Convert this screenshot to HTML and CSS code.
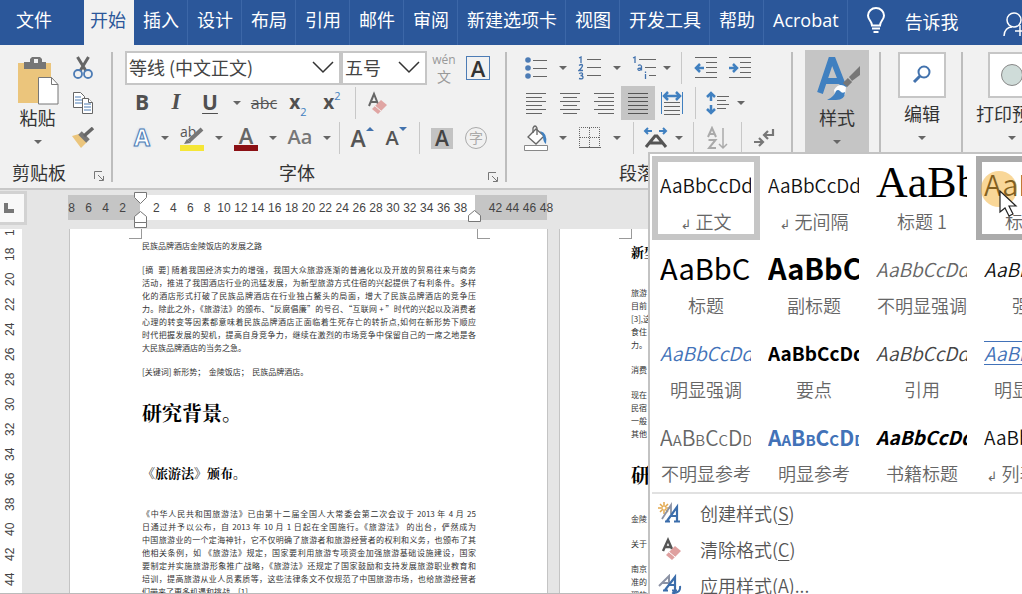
FILE: index.html
```
<!DOCTYPE html>
<html lang="zh-CN">
<head>
<meta charset="utf-8">
<title>文档编辑器</title>
<link rel="stylesheet" href="styles.css">
</head>
<body>
<nav class="tabs">
  <button class="tab file">文件</button>
  <button class="tab active">开始</button>
  <button class="tab">插入</button>
  <button class="tab">设计</button>
  <button class="tab">布局</button>
  <button class="tab">引用</button>
  <button class="tab">邮件</button>
  <button class="tab">审阅</button>
  <button class="tab">新建选项卡</button>
  <button class="tab">视图</button>
  <button class="tab">开发工具</button>
  <button class="tab">帮助</button>
  <button class="tab">Acrobat</button>
  <button class="tell"><svg width="20" height="28" viewBox="0 0 20 28" fill="none" stroke="#fff" stroke-width="2"><path d="M6 18.500C6 14 2 13 2 8.500a8 7.500 0 0 1 16 0C18 13 14 14 14 18.500zM6 21.500h8M7.500 25h5"/></svg><span>告诉我</span></button>
  <button class="share" aria-label="共享"><svg width="26" height="26" viewBox="0 0 26 26" fill="none" stroke="#fff" stroke-width="1.500"><circle cx="11" cy="9" r="7"/><path d="M1 25c0-6 4-9 8-9M17 14v11M12 20h12"/></svg></button>
</nav>

<header class="ribbon">
  <section class="group clipboard">
    <div class="clip-body">
      <button class="big paste">
        <svg width="42" height="48" viewBox="0 0 42 48"><path fill="#ebc57c" d="M1 6h33v40H1z"/><path fill="#767676" d="M7 5h6V2l2-2h8l2 2v3h4v7H7z"/><path fill="#f1f1f1" d="M17 2h4v4h-4z"/><path fill="#fff" stroke="#777" d="M21.500 20.500h13l6.500 7v19.500H21.500z"/><path fill="none" stroke="#777" d="M34.500 20.500v7H41"/></svg>
        <span>粘贴</span><i class="caret"></i>
      </button>
      <div class="clip-tools">
        <button class="ic" aria-label="剪切"><svg width="20" height="24" viewBox="0 0 20 24"><path fill="none" stroke="#666" stroke-width="3" d="M4.500 1 13 15M15.500 1 7 15"/><g fill="none" stroke="#4d7cb5" stroke-width="1.800"><circle cx="5" cy="18" r="4"/><circle cx="15" cy="18" r="4"/></g></svg></button>
        <button class="ic" aria-label="复制"><svg width="22" height="24" viewBox="0 0 22 24" fill="#fff" stroke="#666"><path d="M1.500 1.500h7l4 4v11h-11z"/><path stroke="#4d7cb5" d="M3 6h6M3 9h7M3 12h7"/><path d="M10.500 7.500h6l4 4v11h-10z"/><path d="M16.500 7.500v4h4"/><path stroke="#4d7cb5" d="M12 13h7M12 16h7M12 19h7"/></svg></button>
        <button class="ic" aria-label="格式刷"><svg width="24" height="22" viewBox="0 0 24 22"><path fill="#ebc57c" d="m1 9 7-2 8 8-6 6z"/><path stroke="#777" stroke-width="5" d="m9 6 8 8"/><path stroke="#666" stroke-width="3.500" d="m13 9 9-8"/></svg></button>
      </div>
    </div>
    <footer class="label"><span>剪贴板</span><button class="launch" aria-label="剪贴板选项"><svg width="11" height="11" viewBox="0 0 11 11" fill="none" stroke="#777"><path d="M.5 8V.5H8M4 4l5 5M9.500 5v4.500H5"/></svg></button></footer>
  </section>

  <section class="group font">
    <div class="row">
      <label class="combo family"><select aria-label="字体"><option>等线 (中文正文)</option></select><svg width="22" height="14" viewBox="0 0 22 14"><path d="m1 1 10 10L21 1" fill="none" stroke="#333" stroke-width="1.500"/></svg></label>
      <label class="combo size"><select aria-label="字号"><option>五号</option></select><svg width="22" height="14" viewBox="0 0 22 14"><path d="m1 1 10 10L21 1" fill="none" stroke="#333" stroke-width="1.500"/></svg></label>
      <button class="ic pinyin" aria-label="拼音指南"><small>wén</small><span>文</span></button>
      <button class="ic"><span class="boxed">A</span></button>
    </div>
    <div class="row">
      <button class="ic g bold">B</button><button class="ic g italic">I</button><button class="ic g under">U</button><button class="dd" aria-label="下划线选项"><i class="caret"></i></button>
      <button class="ic strike">abc</button><button class="ic g script">x<sub>2</sub></button><button class="ic g script">x<sup>2</sup></button><i class="sep"></i>
      <button class="ic" aria-label="清除格式"><svg width="20" height="24" viewBox="0 0 20 24"><path fill="none" stroke="#666" stroke-width="2" d="M1 15 6 3l4 10M3 11h6"/><path fill="#e0a5a3" d="m4 18 9-9 6 5-9 9z"/><path stroke="#f1f1f1" d="m7 15 6 5"/></svg></button>
    </div>
    <div class="row">
      <button class="ic glow">A</button><button class="dd s" aria-label="文本效果选项"><i class="caret"></i></button>
      <button class="ic w" aria-label="突出显示"><svg width="24" height="26" viewBox="0 0 24 26"><text x="0" y="12" class="svg-ab">ab</text><path stroke="#777" stroke-width="4" d="m9 16 13-12"/><path fill="#777" d="m4 19 3-5 4 4z"/><path fill="#f5e636" d="M0 20h24v6H0z"/></svg></button><button class="dd s" aria-label="突出显示颜色"><i class="caret"></i></button>
      <button class="ic w"><span class="ink">A</span></button><button class="dd s" aria-label="字体颜色选项"><i class="caret"></i></button>
      <button class="ic w case">Aa</button><button class="dd s" aria-label="更改大小写选项"><i class="caret"></i></button><i class="sep"></i>
      <button class="ic grow">A<i class="tri up"></i></button><button class="ic grow less">A<i class="tri down"></i></button><i class="sep"></i>
      <button class="ic"><span class="shade">A</span></button><button class="ic"><span class="ring">字</span></button>
    </div>
    <footer class="label mid"><span>字体</span><button class="launch" aria-label="字体选项"><svg width="11" height="11" viewBox="0 0 11 11" fill="none" stroke="#777"><path d="M.5 8V.5H8M4 4l5 5M9.500 5v4.500H5"/></svg></button></footer>
  </section>

  <section class="group para">
    <div class="row">
      <button class="ic" aria-label="项目符号"><svg width="24" height="22" viewBox="0 0 24 22"><g fill="#4d7cb5"><circle cx="4" cy="3" r="2.800"/><circle cx="4" cy="11" r="2.800"/><circle cx="4" cy="19" r="2.800"/></g><path stroke="#666" d="M9 3.500h14M9 11.500h14M9 19.500h14"/></svg></button><button class="dd" aria-label="项目符号选项"><i class="caret"></i></button>
      <button class="ic" aria-label="编号"><svg width="24" height="24" viewBox="0 0 24 24"><g fill="none" stroke="#4272ad" stroke-width="1.300"><path d="m1 2 2-1v6M1 9.500q3-2 3.500 0 0 1.500-3.500 5h4M1 17.500q4-1.500 3.500 1 0 1-2 1 2.500 0 2.500 2 0 2-4 1"/></g><path stroke="#666" d="M9 3.500h14M9 11.500h14M9 19.500h14"/></svg></button><button class="dd" aria-label="编号选项"><i class="caret"></i></button>
      <button class="ic" aria-label="多级列表"><svg width="26" height="24" viewBox="0 0 26 24"><g fill="none" stroke="#4272ad" stroke-width="1.300"><path d="m2 2 2-1v6M7 9.500q3-1.500 3.500 1v4M10.500 12q-4 0-3.500 1.500 1 2 3.500-.5M14.500 18v5M14.500 15.500V17"/></g><path stroke="#666" d="M8 3.500h17M14 11.500h11M18 19.500h7"/></svg></button><button class="dd s" aria-label="多级列表选项"><i class="caret"></i></button><i class="sep m"></i>
      <button class="ic" aria-label="减少缩进"><svg width="24" height="22" viewBox="0 0 24 22"><path stroke="#666" d="M1 .5h22M12 5.500h11M12 10.500h11M12 15.500h11M1 20.500h22"/><path fill="none" stroke="#4080c0" stroke-width="2.500" d="M10 11H2m4-4-4 4 4 4"/></svg></button>
      <button class="ic" aria-label="增加缩进"><svg width="24" height="22" viewBox="0 0 24 22"><path stroke="#666" d="M1 .5h22M12 5.500h11M12 10.500h11M12 15.500h11M1 20.500h22"/><path fill="none" stroke="#4080c0" stroke-width="2.500" d="M1 11h8M5 7l4 4-4 4"/></svg></button>
    </div>
    <div class="row">
      <button class="ic" aria-label="左对齐"><svg width="20" height="22" viewBox="0 0 20 22" stroke="#666"><path d="M0 1.500h20M0 5.500h16M0 9.500h20M0 13.500h16M0 17.500h20M0 21.500h16"/></svg></button>
      <button class="ic" aria-label="居中"><svg width="20" height="22" viewBox="0 0 20 22" stroke="#666"><path d="M0 1.500h20M3 5.500h14M0 9.500h20M3 13.500h14M0 17.500h20M3 21.500h14"/></svg></button>
      <button class="ic" aria-label="右对齐"><svg width="20" height="22" viewBox="0 0 20 22" stroke="#666"><path d="M0 1.500h20M4 5.500h16M0 9.500h20M4 13.500h16M0 17.500h20M4 21.500h16"/></svg></button>
      <button class="ic pressed" aria-label="两端对齐"><svg width="20" height="22" viewBox="0 0 20 22" stroke="#555"><path d="M0 1.500h20M0 5.500h20M0 9.500h20M0 13.500h20M0 17.500h20M0 21.500h20"/></svg></button>
      <button class="ic" aria-label="分散对齐"><svg width="22" height="24" viewBox="0 0 22 24"><path stroke="#4080c0" d="M.5 1v22M21.500 1v22"/><path stroke="#4080c0" stroke-width="2.500" fill="none" d="M4 5h14M7 1 3 5l4 4M15 1l4 4-4 4"/><path stroke="#666" d="M3 11.500h16M3 15.500h16M3 19.500h16M3 23.500h16"/></svg></button><i class="sep"></i>
      <button class="ic" aria-label="行距"><svg width="24" height="24" viewBox="0 0 24 24"><path stroke="#4080c0" stroke-width="2.500" fill="none" d="M5 2v8M1 6l4-4 4 4M5 14v8M1 18l4 4 4-4"/><path stroke="#666" d="M11 5.500h12M11 9.500h9M11 13.500h12M11 17.500h9"/></svg></button><button class="dd s" aria-label="行距选项"><i class="caret"></i></button>
    </div>
    <div class="row">
      <button class="ic" aria-label="底纹"><svg width="26" height="26" viewBox="0 0 26 26"><path fill="#fff" stroke="#666" stroke-width="1.300" d="m5 12 8-8 8 7-8 8z"/><path fill="none" stroke="#666" stroke-width="1.300" d="M10 8V3q2-4 4 0v7"/><path fill="#4080c0" d="M17 6q8 2 6 13-3-2-3-8z"/><path fill="#fff" stroke="#888" d="M1.500 20.500h23v5h-23z"/></svg></button><button class="dd" aria-label="底纹选项"><i class="caret"></i></button>
      <button class="ic" aria-label="边框"><svg width="22" height="22" viewBox="0 0 22 22" fill="none" stroke="#666"><path stroke-dasharray="1 1" d="M.5 21V.5h20V21M10.500 1v20M1 10.500h20"/><path d="M0 20.500h22"/></svg></button><button class="dd" aria-label="边框选项"><i class="caret"></i></button><i class="sep"></i>
      <button class="ic" aria-label="中文版式"><svg width="26" height="22" viewBox="0 0 26 22"><path fill="none" stroke="#4080c0" stroke-width="2" d="M9 4H2m3-3L2 4l3 3M16 4h7m-3-3 3 3-3 3"/><path fill="none" stroke="#555" stroke-width="3" d="m3 20 9-11h2l9 11M7 16h12"/></svg></button><button class="dd s" aria-label="中文版式选项"><i class="caret"></i></button><i class="sep m"></i>
      <button class="ic" aria-label="排序"><svg width="22" height="24" viewBox="0 0 22 24"><g fill="none" stroke="#aaa" stroke-width="2"><path d="M1 11 5 2l4 9M3 8h5M1.500 14h7l-6.500 8h7"/></g><path fill="none" stroke="#aaa" stroke-width="1.500" d="M16 2v20M12 18l4 4 4-4"/></svg></button><i class="sep"></i>
      <button class="ic" aria-label="显示编辑标记"><svg width="22" height="20" viewBox="0 0 22 20" fill="none" stroke="#777" stroke-width="2.200"><path d="M20 1v6h-9m4-4-4 4 4 4M1 14h9m-4-4 4 4-4 4"/></svg></button>
    </div>
    <footer class="label mid"><span>段落</span></footer>
  </section>

  <section class="group styles">
    <button class="big on"><svg width="46" height="44" viewBox="0 0 46 44"><path fill="none" stroke="#4080c0" stroke-width="6" d="M4 36 15 3h2l11 28M9 24h15"/><path stroke="#777" stroke-width="6" d="m29 28 5-5"/><path fill="#777" d="m33 20 11-11v9l-8 6z"/><path fill="#fff" d="M18 33q5-8 12-3l-1 8-9 4z"/><path fill="#4080c0" d="M11 43q7-3 9-9 2-2 4 0 2 3 5 1 0 8-9 8z"/></svg><span>样式</span><i class="caret"></i></button>
  </section>
  <section class="group edit">
    <button class="big"><span class="tile"><svg width="20" height="20" viewBox="0 0 20 20" fill="none" stroke="#4272ad"><circle cx="12" cy="7" r="5.500" stroke-width="2"/><path stroke-width="3" d="m8 11-6 6"/></svg></span><span>编辑</span><i class="caret"></i></button>
  </section>
  <section class="group print">
    <button class="big"><span class="tile"><svg width="24" height="24" viewBox="0 0 24 24"><circle cx="12" cy="12" r="10.500" fill="#cfdcd9" stroke="#888"/></svg></span><span>打印预览</span><i class="caret"></i></button>
  </section>
</header>

<main class="work">
  <aside class="side">
    <button class="tabstop" aria-label="制表符"><i></i></button>
    <div class="vruler"><span>16</span><span>18</span><span>20</span><span>22</span><span>24</span><span>26</span><span>28</span><span>30</span><span>32</span><span>34</span><span>36</span><span>38</span><span>40</span><span>42</span><span>44</span></div>
  </aside>
  <div class="desk">
    <div class="hruler">
      <div class="out before"><span>8</span><span>6</span><span>4</span><span>2</span></div>
      <div class="in"><span>2</span><span>4</span><span>6</span><span>8</span><span>10</span><span>12</span><span>14</span><span>16</span><span>18</span><span>20</span><span>22</span><span>24</span><span>26</span><span>28</span><span>30</span><span>32</span><span>34</span><span>36</span><span>38</span>
        <svg class="mark start" width="14" height="38" viewBox="0 0 14 38" fill="#fff" stroke="#777"><path d="M.5 1.500h12v5l-6 6-6-6zM.5 31.500v-6l6-5 6 5v6zM.5 31.500h12v5H.5z"/></svg>
        <svg class="mark end" width="14" height="14" viewBox="0 0 14 14" fill="#fff" stroke="#777"><path d="M.5 12.500v-6l6-5 6 5v6z"/></svg>
      </div>
      <div class="out after"><span>42</span><span>44</span><span>46</span><span>48</span></div>
    </div>
    <div class="pages">
      <article class="page">
        <i class="corner left"></i><i class="corner right"></i>
        <p>民族品牌酒店金陵饭店的发展之路</p>
        <p class="just"><span>[摘&nbsp; 要] 随着我国经济实力的增强，我国大众旅游逐渐的普遍化以及开放的贸易往来与商务</span><span>活动，推进了我国酒店行业的迅猛发展，为新型旅游方式住宿的兴起提供了有利条件。多样</span><span>化的酒店形式打破了民族品牌酒店在行业独占鳌头的局面，增大了民族品牌酒店的竞争压</span><span>力。除此之外，《旅游法》的颁布、“反腐倡廉”的号召、“互联网 + ”时代的兴起以及消费者</span><span>心理的转变等因素都意味着民族品牌酒店正面临着生死存亡的转折点,如何在新形势下顺应</span><span>时代把握发展的契机，提高自身竞争力，继续在激烈的市场竞争中保留自己的一席之地是各</span><span class="last">大民族品牌酒店的当务之急。</span></p>
        <p>[关键词] 新形势；&nbsp; 金陵饭店；&nbsp; 民族品牌酒店。</p>
        <h1>研究背景。</h1>
        <h2>《旅游法》颁布。</h2>
        <p class="just"><span>《中华人民共和国旅游法》已由第十二届全国人大常委会第二次会议于 2013 年 4 月 25</span><span>日通过并予以公布，自 2013 年 10 月 1 日起在全国施行。《旅游法》 的出台，俨然成为</span><span>中国旅游业的一个定海神针，它不仅明确了旅游者和旅游经营者的权利和义务，也颁布了其</span><span>他相关条例，如 《旅游法》规定，国家要利用旅游专项资金加强旅游基础设施建设，国家</span><span>要制定并实施旅游形象推广战略，《旅游法》还规定了国家鼓励和支持发展旅游职业教育和</span><span>培训，提高旅游从业人员素质等，这些法律条文不仅规范了中国旅游市场，也给旅游经营者</span><span class="last">们带来了更多机遇和挑战。[1]</span></p>
      </article>
      <article class="page second">
        <i class="corner left"></i>
        <h2>新型</h2>
        <p>旅游<br>目前<br>[3],这<br>食住<br>力。</p>
        <p>消费</p>
        <p>现在<br>民宿<br>一般<br>其他</p>
        <h1>研</h1>
        <p>金陵</p>
        <p>关于</p>
        <p>南京<br>准的<br>理的</p>
      </article>
    </div>
  </div>
</main>

<div class="popup">
  <div class="gallery">
    <button class="style cur"><b class="pv">AaBbCcDd</b><span><i class="ret">↲</i> 正文</span></button>
    <button class="style"><b class="pv">AaBbCcDd</b><span><i class="ret">↲</i> 无间隔</span></button>
    <button class="style"><b class="pv song">AaBb</b><span>标题 1</span></button>
    <button class="style hover"><b class="pv h2">AaBb</b><span>标题 2</span>
      <i class="halo"></i><svg class="pointer" width="20" height="28" viewBox="0 0 20 28"><path fill="#fff" stroke="#222" stroke-width="1.200" d="M1 1v21l5-4 4 8 4-2-4-8h7z"/></svg></button>
    <button class="style"><b class="pv title">AaBbCc</b><span>标题</span></button>
    <button class="style"><b class="pv title heavy">AaBbCc</b><span>副标题</span></button>
    <button class="style"><b class="pv it soft">AaBbCcDd</b><span>不明显强调</span></button>
    <button class="style"><b class="pv it">AaBbCcDd</b><span>强调</span></button>
    <button class="style"><b class="pv it blue">AaBbCcDd</b><span>明显强调</span></button>
    <button class="style"><b class="pv heavy">AaBbCcDd</b><span>要点</span></button>
    <button class="style"><b class="pv it dim">AaBbCcDd</b><span>引用</span></button>
    <button class="style"><b class="pv it blue lined"><u>AaBbCcDd</u></b><span>明显引用</span></button>
    <button class="style"><b class="pv caps soft">AaBbCcDd</b><span>不明显参考</span></button>
    <button class="style"><b class="pv caps blue heavy">AaBbCcDd</b><span>明显参考</span></button>
    <button class="style"><b class="pv it heavy">AaBbCcDd</b><span>书籍标题</span></button>
    <button class="style"><b class="pv">AaBbCcDd</b><span><i class="ret">↲</i> 列表段落</span></button>
  </div>
  <div class="menu">
    <button><svg width="24" height="22" viewBox="0 0 24 22"><path stroke="#e3a94e" stroke-width="1.500" d="M6 0v12M0 6h12M2 2l8 8M10 2l-8 8"/><circle cx="6" cy="6" r="1.500" fill="#fff"/><path fill="none" stroke="#8c93a5" stroke-width="1.800" d="M4 17 13 3v9"/><path fill="none" stroke="#3b6dab" stroke-width="2.200" d="M9 19 19 5v14M12 14h7M7 19.500h5M16 19.500h6"/></svg><span>创建样式(<u>S</u>)</span></button>
    <button><svg width="24" height="24" viewBox="0 0 24 24"><path fill="none" stroke="#555" stroke-width="2.400" d="M5 14 10 3l4 9M7 10h6"/><path fill="#dfa09f" d="m8 18 9-9 6 5-9 9z"/><path stroke="#fff" d="m11 15 6 5"/></svg><span>清除格式(<u>C</u>)</span></button>
    <button><svg width="24" height="22" viewBox="0 0 24 22"><path fill="none" stroke="#8c93a5" stroke-width="2" d="M1 12 11 2v10M4 9h7"/><path fill="none" stroke="#3b6dab" stroke-width="2.200" d="M7 16 17 3v13M10 11h7M5 16.500h5M14 16.500h5"/><path fill="none" stroke="#3b6dab" stroke-width="2" d="M22 12q1 7-7 7m3-3-3 3 3 3"/></svg><span>应用样式(<u>A</u>)...</span></button>
  </div>
</div>
</body>
</html>
```
FILE: styles.css
```
* { box-sizing: border-box; }
body {
  margin: 0;
  height: 100vh;
  display: flex;
  flex-direction: column;
  overflow: hidden;
  position: relative;
  background: #e5e5e5;
  color: #333;
  font: 18px/24px "Noto Sans CJK SC", sans-serif;
}
button, select { font: inherit; color: inherit; border: 0; padding: 0; background: none; }
svg { display: block; flex: none; }
i { font-style: normal; }

.tabs { flex: none; display: flex; height: 45px; background: #2b579a; color: #fff; overflow: hidden; }
.tab { flex: none; padding: 0 8px 5px 9px; border-right: 1px solid #3c67a8; font-family: "Open Sans", "Noto Sans CJK SC", sans-serif; white-space: nowrap; }
.tab.file { padding: 0 32px 5px 16px; border: 0; }
.tab.active { background: #f1f1f1; color: #2b579a; padding: 0 8px 5px 6px; border: 0; }
.tell { flex: none; display: flex; align-items: center; gap: 19px; padding: 0 0 4px 18px; }
.share { flex: none; margin-left: auto; padding-top: 2px; margin-right: -7px; }

.ribbon { flex: none; display: flex; height: 145px; background: #f1f1f1; border-bottom: 2px solid #c8c8c8; overflow: hidden; }
.group { flex: none; display: flex; flex-direction: column; padding-top: 6px; position: relative; }
.group::after { content: ""; position: absolute; right: 0; top: 7px; bottom: 6px; width: 2px; background: #bdbdbd; }
.clipboard { width: 113px; }
.font { width: 394px; padding-left: 12px; }
.para { width: 286px; padding-left: 12px; }
.styles { width: 88px; padding: 5px 12px 0; }
.edit { width: 82px; align-items: center; }
.print { width: 98px; align-items: center; }

.row { display: flex; align-items: center; height: 34px; margin-bottom: 1px; }
.ic { flex: none; width: 34px; height: 34px; display: flex; align-items: center; justify-content: center; }
.ic.w { width: 42px; }
.dd { flex: none; width: 20px; height: 34px; display: grid; place-items: center; }
.dd.s { width: 12px; }
.caret { display: block; border: 4px solid transparent; border-top-color: #666; border-bottom: 0; }
.sep { flex: none; width: 12px; height: 32px; display: flex; justify-content: center; }
.sep::before { content: ""; width: 1px; background: #c8c8c8; }
.sep.m { width: 16px; }
.pressed { background: #c5c5c5; }

.combo { display: grid; align-items: center; background: #fff; border: 2px solid #c6c6c6; height: 34px; }
.combo select { grid-area: 1 / 1; appearance: none; width: 100%; height: 26px; line-height: 24px; padding: 0 0 2px 2px; color: #444; }
.combo svg { grid-area: 1 / 1; justify-self: end; margin-right: 5px; pointer-events: none; }
.family { width: 216px; }
.size { width: 86px; }
.pinyin { flex-direction: column; color: #999; font-size: 14px; line-height: 17px; }
.pinyin small { font: 12px/17px "Open Sans", sans-serif; }
.pinyin span { height: 17px; }
.boxed { width: 24px; border: 1px solid #4d7cb5; font: 600 22px/22px "Open Sans", sans-serif; }

.g { font: bold 21px/24px "Open Sans", sans-serif; color: #505050; padding-bottom: 2px; }
.italic { font: italic bold 23px/24px "Liberation Serif", serif; }
.under { text-decoration: underline; text-underline-offset: 3px; text-decoration-thickness: 1px; }
.strike { font: 16px/24px "Open Sans", sans-serif; text-decoration: line-through; color: #555; }
.script { font-size: 19px; }
.script sub, .script sup { font: 11px/12px "Open Sans", sans-serif; color: #4080c0; }
.script sub { align-self: flex-end; }
.script sup { align-self: flex-start; padding-top: 4px; }
.glow { font: bold 23px/24px "Open Sans", sans-serif; color: #fff; -webkit-text-stroke: 1px #4d7cb5; text-shadow: 0 0 3px #8fb8e6; padding-bottom: 2px; }
.ink { width: 24px; font: 600 22px/20px "Open Sans", sans-serif; color: #666; border-bottom: 6px solid #8b1014; }
.case { font: 600 20px/24px "Open Sans", sans-serif; color: #777; padding-bottom: 2px; }
.grow { font: 600 23px/24px "Open Sans", sans-serif; color: #555; }
.less { font-size: 20px; }
.tri { align-self: flex-start; margin-top: 6px; border: 4px solid transparent; }
.tri.up { border-bottom-color: #4272ad; border-top: 0; }
.tri.down { border-top-color: #4272ad; border-bottom: 0; }
.shade { width: 22px; background: #c3c3c3; font: 600 21px/21px "Open Sans", sans-serif; color: #444; }
.ring { width: 22px; height: 22px; border: 1px solid #aaa; border-radius: 50%; color: #aaa; font-size: 14px; line-height: 19px; }
.svg-ab { font: 14px "Open Sans", sans-serif; fill: #555; }

.label { display: flex; align-items: center; padding-top: 4px; }
.label.mid { justify-content: center; margin-right: 38px; }
.font .label { position: relative; }
.launch { margin-left: auto; padding-top: 8px; }
.clipboard .label { padding: 4px 8px 0 12px; }
.font .launch { position: absolute; right: -30px; top: 8px; }

.clip-body { display: flex; height: 105px; }
.clip-tools { display: flex; flex-direction: column; gap: 1px; }
.big { display: flex; flex-direction: column; align-items: center; white-space: nowrap; }
.big .caret { margin-top: 11px; }
.paste { width: 66px; padding: 6px 0 0 9px; }
.on { background: #c5c5c5; height: 140px; padding-top: 7px; }
.on svg { margin: 0 0 4px 4px; }
.tile { width: 48px; height: 46px; display: grid; place-items: center; background: #fff; border: 2px solid #c6c6c6; margin: 1px 0 3px; }

.work { flex: 1; min-height: 0; display: flex; border-bottom: 1px solid #bbb; }
.side { flex: none; width: 68px; display: flex; flex-direction: column; }
.tabstop { width: 27px; height: 34px; margin-top: 1px; border: 3px solid #d2d2d2; border-left: 0; background: #f8f8f8; display: grid; place-items: center start; padding-left: 4px; }
.tabstop i { width: 10px; height: 10px; border: solid #777; border-width: 0 0 4px 4px; }
.vruler { flex: 1; margin-top: 4px; width: 22px; background: #fff; overflow: hidden; display: flex; flex-direction: column; }
.vruler span { flex: none; height: 25px; line-height: 20px; writing-mode: vertical-rl; transform: rotate(180deg); text-align: center; }
.vruler span:first-child { margin-top: -12px; }
.vruler, .hruler { font-family: "Liberation Sans", "Noto Sans CJK SC", sans-serif; font-size: 12px; color: #444; }

.desk { flex: 1; min-width: 0; display: flex; flex-direction: column; }
.hruler { flex: none; display: flex; height: 25px; margin: 5px 0 9px; line-height: 26px; text-align: center; }
.hruler span { flex: 1; min-width: 0; }
.out { display: flex; background: #c5c5c5; width: 72px; }
.out span { flex: none; width: 17px; }
.before { padding-right: 9px; justify-content: flex-end; }
.after { padding-left: 12px; }
.in { position: relative; display: flex; width: 335px; padding: 0 6px 0 8px; background: #fff; }
.mark { position: absolute; }
.mark.start { left: -6px; top: -4px; }
.mark.end { right: -7px; bottom: -3px; }

.pages { flex: 1; min-height: 0; display: flex; gap: 11px; padding-left: 1px; overflow: hidden; }
.page { flex: none; position: relative; width: 479px; padding: 10px 71px 0 72px; background: #fff; border: solid #c4c4c4; border-width: 0 1px; font-size: 8px; line-height: 13px; color: #333; overflow: hidden; }
.page p { margin: 0 0 11px; }
.page h1 { margin: 22px 0 37px; font: bold 20px/26px "Noto Serif CJK SC", "Noto Sans CJK SC", serif; color: #000; }
.page h2 { margin: 0 0 24px; font: bold 13px/20px "Noto Serif CJK SC", "Noto Sans CJK SC", serif; color: #000; }
.just span { display: block; text-align: justify; text-align-last: justify; white-space: nowrap; }
.just .last { text-align-last: left; }
.page.second { padding: 13px 71px 0; }
.second p { margin-bottom: 12px; }
.page.second h1 { margin-bottom: 24px; }
.corner { position: absolute; top: 0; width: 13px; height: 10px; border: solid #999; border-width: 0 0 1px 1px; }
.corner.left { left: 59px; border-width: 0 1px 1px 0; }
.corner.right { right: 57px; }

.popup { position: absolute; left: 648px; right: 0; top: 152px; bottom: 0; background: #fff; border: solid #c3c3c3; border-width: 2px 0 0 2px; padding: 2px 0 0 2px; overflow: hidden; }
.gallery { display: grid; grid-template-columns: repeat(4, 108px); border-bottom: 2px solid #e1e1e1; color: #666; }
.style { position: relative; width: 108px; height: 84px; border: 6px solid transparent; display: flex; flex-direction: column; font-weight: 350; text-align: center; }
.style > span { width: 96px; height: 24px; white-space: nowrap; }
.cur { border-color: #c6c6c6; }
.hover { border-color: #ababab; }
.ret { font: 13px/13px "DejaVu Sans", sans-serif; }
.pv { display: block; width: 91px; height: 47px; margin-left: 2px; overflow: hidden; white-space: nowrap; text-align: left; font-weight: 350; font-size: 19px; line-height: 46px; color: #111; }
.pv.it { font-style: italic; }
.pv.heavy { font-weight: 700; color: #000; }
.pv.title { font-size: 29px; font-weight: 400; line-height: 42px; color: #000; }
.pv.title.heavy { font-weight: 700; }
.pv.song { font: 44px/42px "Liberation Serif", serif; color: #000; }
.pv.h2 { font-size: 29px; line-height: 42px; }
.pv.soft { color: #666; }
.pv.dim { color: #444; }
.pv.blue { color: #4272b8; }
.pv.caps { font-variant-caps: small-caps; font-size: 21px; }
.lined u { display: inline-block; line-height: 22px; text-decoration: none; border: solid #4272b8; border-width: 1px 0; }
.halo { position: absolute; left: -1px; top: 9px; width: 36px; height: 36px; border-radius: 50%; background: rgba(244, 176, 50, 0.5); }
.pointer { position: absolute; left: 17px; top: 28px; }
.menu { display: flex; flex-direction: column; padding-top: 1px; color: #555; }
.menu button { flex: none; display: flex; align-items: center; gap: 18px; height: 36px; padding-left: 6px; font-weight: 350; }
.menu u { text-underline-offset: 3px; }
```
